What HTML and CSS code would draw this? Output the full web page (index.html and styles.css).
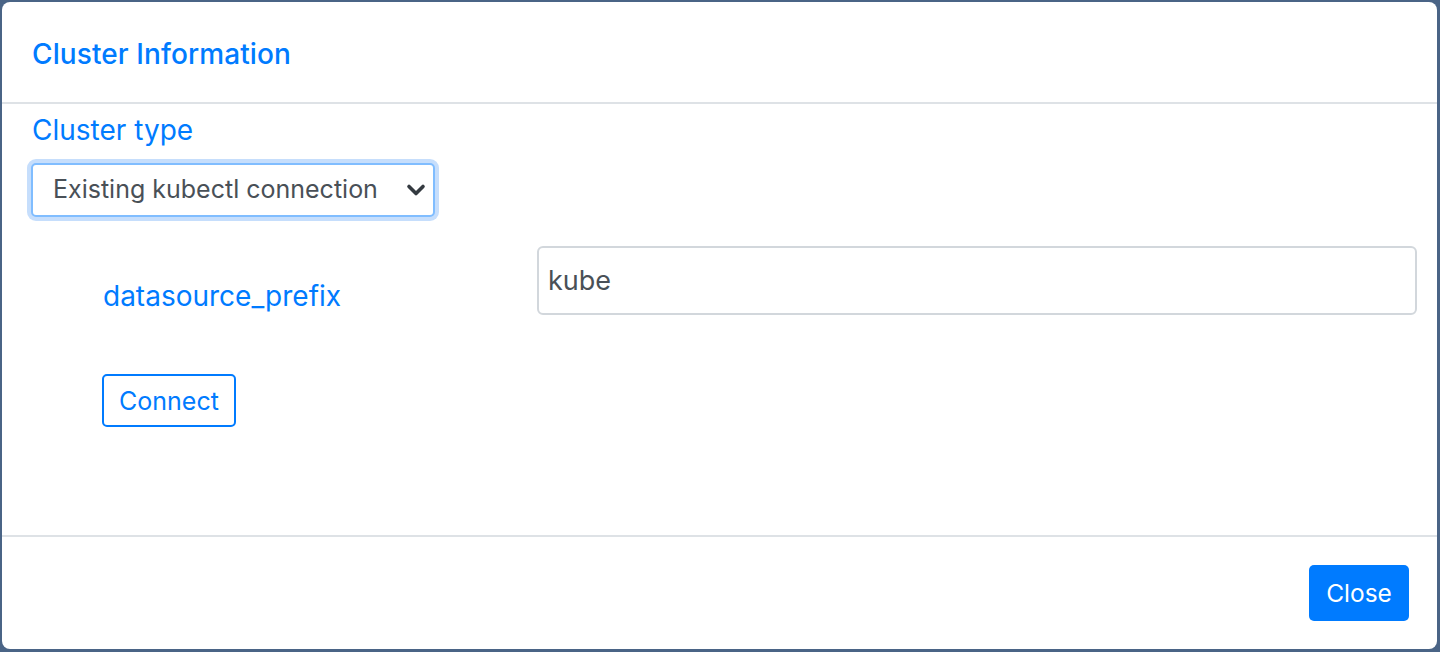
FILE: index.html
```html
<!DOCTYPE html>
<html lang="en">
<head>
<meta charset="utf-8">
<title>Cluster Information</title>
<link rel="stylesheet" href="styles.css">
</head>
<body>
<div class="modal">
  <div class="modal-header">
    <h5 class="modal-title">Cluster Information</h5>
  </div>
  <div class="modal-body">
    <label class="field-label">Cluster type</label>
    <div class="select-wrap">
      <div class="select">
        <span class="select-text">Existing kubectl connection</span>
        <svg class="chevron" width="20" height="14" viewBox="0 0 20 14" aria-hidden="true">
          <polyline points="3,3.5 10,10.5 17,3.5" fill="none" stroke="#343a40" stroke-width="3.6" stroke-linecap="round" stroke-linejoin="round"/>
        </svg>
      </div>
    </div>
    <div class="param-row">
      <div class="param-name">datasource_prefix</div>
      <div class="param-input"><span class="input-text">kube</span></div>
    </div>
    <div class="actions">
      <button class="btn-outline">Connect</button>
    </div>
  </div>
  <div class="modal-footer">
    <button class="btn-primary">Close</button>
  </div>
</div>
</body>
</html>
```

FILE: styles.css
```css
* { box-sizing: border-box; }
html, body { margin: 0; padding: 0; }
body {
  background: #4a6486;
  height: 652px;
  padding: 2px 3px 3px 2px;
  font-family: Inter, "Noto Sans", "Liberation Sans", sans-serif;
}
.modal {
  background: #fff;
  border-radius: 8px;
  height: 647px;
  display: flex;
  flex-direction: column;
  overflow: hidden;
}
.modal-header {
  height: 102px;
  border-bottom: 2px solid #dee2e6;
  display: flex;
  align-items: center;
  padding: 4px 30px 0;
}
.modal-title {
  margin: 0;
  font-size: 28px;
  font-weight: 500;
  color: #007bff;
  letter-spacing: 0.1px;
}
.modal-body {
  flex: 1;
  padding: 10px 30px 0;
  display: flex;
  flex-direction: column;
  border-bottom: 2px solid #dee2e6;
}
.field-label {
  font-size: 28px;
  color: #007bff;
  line-height: 32px;
}
.select-wrap {
  margin-top: 13px;
  margin-left: -5px;
  width: 412px;
  padding: 4px;
  border-radius: 9px;
  background: #c6defc;
}
.select {
  height: 54px;
  border: 2px solid #80bdff;
  border-radius: 5px;
  background: #fff;
  display: flex;
  align-items: center;
  justify-content: space-between;
  padding: 0 7px 2px 20px;
}
.select-text {
  font-size: 25px;
  color: #495057;
}
.chevron { display: block; margin-top: 2px; }
.param-row {
  display: flex;
  align-items: center;
  margin-top: 25px;
  padding-left: 71px;
}
.param-name {
  width: 434px;
  font-size: 28px;
  color: #007bff;
  padding-top: 30px;
}
.param-input {
  flex: 1;
  margin-right: -10px;
  height: 69px;
  border: 2px solid #d2d7dc;
  border-radius: 6px;
  display: flex;
  align-items: center;
  padding: 0 9px;
}
.input-text {
  font-size: 27px;
  color: #495057;
}
.actions {
  margin-top: 59px;
  padding-left: 70px;
}
.btn-outline {
  font-family: inherit;
  width: 134px;
  height: 53px;
  border: 2px solid #007bff;
  border-radius: 5px;
  background: #fff;
  color: #007bff;
  font-size: 25px;
  padding: 0;
}
.modal-footer {
  height: 112px;
  display: flex;
  justify-content: flex-end;
  align-items: flex-start;
  padding: 28px 28px 0;
}
.btn-primary {
  font-family: inherit;
  width: 100px;
  height: 56px;
  border: none;
  border-radius: 5px;
  background: #007bff;
  color: #fff;
  font-size: 24.5px;
  padding: 0;
}
```
